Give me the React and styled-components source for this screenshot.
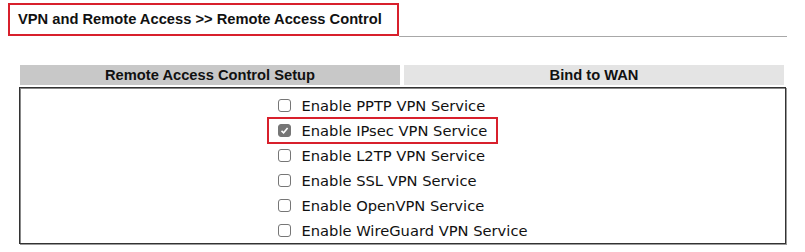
import React from 'react';
import styled, { createGlobalStyle } from 'styled-components';

const Global = createGlobalStyle`
  body {
    margin: 0;
    background: #fff;
    font-family: "Liberation Sans", Arial, sans-serif;
  }
`;

const Page = styled.div`
  width: 805px;
  height: 252px;
  padding: 3px 18px 0 8px;
  box-sizing: border-box;
`;

const TitleBar = styled.div`
  display: flex;
  align-items: flex-end;
`;

const Title = styled.div`
  border: 2px solid #d8202c;
  padding: 6px 15px 7px 8px;
  font-size: 14.7px;
  font-weight: bold;
  color: #111;
  white-space: nowrap;
`;

const Rule = styled.div`
  flex: 1;
  border-bottom: 1px solid #a8a8a8;
  margin-bottom: -1px;
`;

const Panel = styled.div`
  margin: 29px 0 0 11px;
  width: 767px;
`;

const HeadRow = styled.div`
  display: grid;
  grid-template-columns: 380px 380px;
  column-gap: 4px;
  margin: 0 0 2px 1px;
`;

const HeadCell = styled.div`
  height: 20px;
  line-height: 20px;
  text-align: center;
  font-size: 14.7px;
  font-weight: bold;
  color: #111;
  background: ${p => (p.$dark ? '#c8c8c8' : '#e4e4e4')};
`;

const Body = styled.div`
  border: 1px solid #333;
  box-shadow: inset 1px 1px 0 #888, 1px 1px 0 #999;
  height: 157px;
  box-sizing: border-box;
  display: flex;
  justify-content: center;
  padding-top: 5px;
`;

const List = styled.div`
  display: flex;
  flex-direction: column;
  padding-left: 1px;
`;

const Option = styled.label`
  display: flex;
  align-items: center;
  height: ${p => (p.$marked ? '27.4px' : '25.4px')};
  margin: ${p => (p.$marked ? '-1px 0 -1px -11px' : '0')};
  padding: ${p => (p.$marked ? '0 9px' : '0')};
  width: max-content;
  box-sizing: border-box;
  border: ${p => (p.$marked ? '2px solid #d8202c' : 'none')};
  font-family: "DejaVu Sans", Verdana, sans-serif;
  font-size: 14.7px;
  color: #111;
`;

const Box = styled.span`
  width: 11px;
  height: 11px;
  border: 1px solid #767676;
  border-radius: 3px;
  margin-right: 10px;
  display: inline-flex;
  align-items: center;
  justify-content: center;
  background: ${p => (p.$checked ? '#767676' : '#fff')};
`;

const services = [
  { label: 'Enable PPTP VPN Service' },
  { label: 'Enable IPsec VPN Service', checked: true },
  { label: 'Enable L2TP VPN Service' },
  { label: 'Enable SSL VPN Service' },
  { label: 'Enable OpenVPN Service' },
  { label: 'Enable WireGuard VPN Service' },
];

export default function App() {
  return (
    <Page>
      <Global />
      <TitleBar>
        <Title>VPN and Remote Access &gt;&gt; Remote Access Control</Title>
        <Rule />
      </TitleBar>
      <Panel>
        <HeadRow>
          <HeadCell $dark>Remote Access Control Setup</HeadCell>
          <HeadCell>Bind to WAN</HeadCell>
        </HeadRow>
        <Body>
          <List>
            {services.map(s => (
              <Option key={s.label} $marked={s.checked}>
                <Box $checked={s.checked}>
                  {s.checked && (
                    <svg width="9" height="9" viewBox="0 0 9 9">
                      <path d="M1.5 4.8 L3.6 6.8 L7.6 2" stroke="#fff" strokeWidth="1.6" fill="none" />
                    </svg>
                  )}
                </Box>
                {s.label}
              </Option>
            ))}
          </List>
        </Body>
      </Panel>
    </Page>
  );
}
